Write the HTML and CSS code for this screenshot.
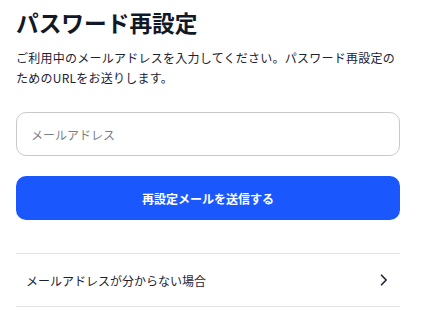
FILE: index.html
```html
<!DOCTYPE html>
<html lang="ja">
<head>
<meta charset="utf-8">
<link rel="stylesheet" href="styles.css">
</head>
<body>
<main class="page">
  <h1 class="title">パスワード再設定</h1>
  <p class="desc">ご利用中のメールアドレスを入力してください。パスワード再設定のためのURLをお送りします。</p>
  <input class="field" type="email" placeholder="メールアドレス">
  <button class="submit" type="button">再設定メールを送信する</button>
  <ul class="links">
    <li class="link-row">
      <span>メールアドレスが分からない場合</span>
      <svg class="chev" width="8" height="12" viewBox="0 0 8 12"><path d="M1.5 1.2 L6.2 6 L1.5 10.8" fill="none" stroke="#1b2233" stroke-width="1.6" stroke-linecap="round" stroke-linejoin="round"/></svg>
    </li>
  </ul>
</main>
</body>
</html>
```

FILE: styles.css
```css
* { box-sizing: border-box; }
html, body { margin: 0; padding: 0; background: #fff; }
body {
  font-family: "Noto Sans CJK JP", "Noto Sans", sans-serif;
  color: #1b2233;
}
.page {
  width: 416px;
  padding: 8px 16px 0 16px;
  display: flex;
  flex-direction: column;
}
.title {
  margin: 0;
  font-size: 22.7px;
  line-height: 30px;
  font-weight: 700;
  color: #111827;
}
.desc {
  margin: 10px 0 0 0;
  font-size: 12px;
  line-height: 20px;
  letter-spacing: 0.25px;
  color: #1b2233;
}
.field {
  margin-top: 24px;
  height: 44px;
  width: 100%;
  border: 1px solid #c9c9c9;
  border-radius: 10px;
  padding: 0 14px;
  font-family: inherit;
  font-size: 12px;
  color: #1b2233;
  outline: none;
}
.field::placeholder { color: #7b7f86; }
.submit {
  margin-top: 20px;
  height: 44px;
  width: 100%;
  border: none;
  border-radius: 10px;
  background: #1a58fd;
  color: #fff;
  font-family: inherit;
  font-size: 12px;
  font-weight: 700;
}
.links {
  list-style: none;
  margin: 33px 0 0 0;
  padding: 0;
}
.link-row {
  height: 54px;
  border-top: 1px solid #e3e3e3;
  border-bottom: 1px solid #e3e3e3;
  display: flex;
  align-items: center;
  justify-content: space-between;
  padding: 0 12px 0 10px;
  font-size: 12px;
}
.chev { display: block; }
```
